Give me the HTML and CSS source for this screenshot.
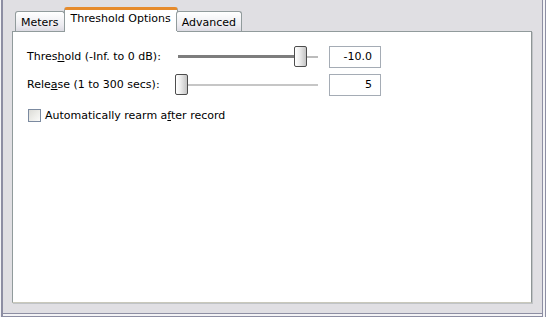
FILE: index.html
```html
<!DOCTYPE html>
<html lang="en">
<head>
  <meta charset="UTF-8">
  <title>Threshold Options</title>
  <link rel="stylesheet" href="styles.css">
</head>
<body>
  <div class="frame">
    <div class="tabs">
      <div class="tab">Meters</div>
      <div class="tab selected">Threshold Options</div>
      <div class="tab">Advanced</div>
    </div>

    <div class="panel">
      <div class="options">
        <label class="opt-label">Thres<u>h</u>old (-Inf. to 0 dB):</label>
        <div class="slider">
          <div class="track-used" style="width: 116px"></div>
          <div class="track-rest"></div>
          <div class="thumb" style="left: 116px"></div>
        </div>
        <input class="value" type="text" value="-10.0">

        <label class="opt-label">Rele<u>a</u>se (1 to 300 secs):</label>
        <div class="slider">
          <div class="track-rest light"></div>
          <div class="thumb" style="left: -3px"></div>
        </div>
        <input class="value" type="text" value="5">
      </div>

      <div class="check-row">
        <span class="checkbox"></span>
        <span>Automatically rearm a<u>f</u>ter record</span>
      </div>
    </div>
  </div>
</body>
</html>
```

FILE: styles.css
```css
html, body {
  margin: 0;
  padding: 0;
}

body {
  font-family: 'DejaVu Sans', sans-serif;
  font-size: 11px;
  color: #000;
  background: #e0dfe3;
}

.frame {
  width: 546px;
  height: 317px;
  box-sizing: border-box;
  padding: 7px 0 0 12px;
  box-shadow: inset 1px 0 0 #f4f4f6, inset 3px 0 0 #8d8ea3,
              inset -1px 0 0 #8d8ea3, inset -3px 0 0 #f4f4f6, inset -4px 0 0 #8d8ea3,
              inset 0 -1px 0 #8d8ea3, inset 0 -3px 0 #f4f4f6, inset 0 -4px 0 #8d8ea3;
}

.tabs {
  display: flex;
  align-items: flex-end;
  height: 24px;
  padding-left: 3px;
  position: relative;
  z-index: 1;
}

.tab {
  height: 20px;
  box-sizing: border-box;
  padding: 4px 5px 0;
  border: 1px solid #919b9c;
  border-bottom: none;
  border-radius: 3px 3px 0 0;
  background: linear-gradient(#ffffff, #ecebf0 70%, #dcdbe3);
}

.tab + .tab {
  margin-left: -1px;
}

.tab.selected {
  height: 25px;
  padding: 2px 6px 0;
  margin: 0 -1px -1px;
  background: #fff;
  border-top: 3px solid #e68b2c;
}

.panel {
  width: 520px;
  height: 272px;
  box-sizing: border-box;
  border: 1px solid #919b9c;
  border-right-color: #8e9596;
  border-bottom-color: #c9c8bb;
  background: #fff;
  box-shadow: 1px 1px 0 #c0c3c6;
  padding: 14px 0 0 14px;
}

.options {
  display: grid;
  grid-template-columns: 151px 140px 63px;
  grid-auto-rows: 21px;
  row-gap: 7px;
  align-items: center;
}

.slider {
  position: relative;
  height: 21px;
  display: flex;
  align-items: center;
}

.track-used {
  height: 3px;
  background: #7d7d7d;
}

.track-rest {
  flex: 1;
  height: 2px;
  background: #bcbcbc;
}

.track-rest.light {
  background: #c6c6c6;
}

.thumb {
  position: absolute;
  top: 0;
  width: 13px;
  height: 21px;
  box-sizing: border-box;
  border: 1px solid #4d4d4d;
  border-radius: 2px;
  background: linear-gradient(to right, #ffffff, #eeeeee 40%, #c4c4c4);
}

.value {
  justify-self: end;
  width: 52px;
  height: 22px;
  box-sizing: border-box;
  border: 1px solid #a5acb5;
  padding: 0 8px 0 0;
  text-align: right;
  font-family: inherit;
  font-size: 11px;
  color: #000;
  outline: none;
}

.check-row {
  display: flex;
  align-items: center;
  gap: 4px;
  margin-top: 14px;
  padding-left: 1px;
}

.checkbox {
  width: 13px;
  height: 13px;
  box-sizing: border-box;
  border: 1px solid #7b8aa0;
  background: linear-gradient(135deg, #dcdcd7, #fbfbf9);
}
```
